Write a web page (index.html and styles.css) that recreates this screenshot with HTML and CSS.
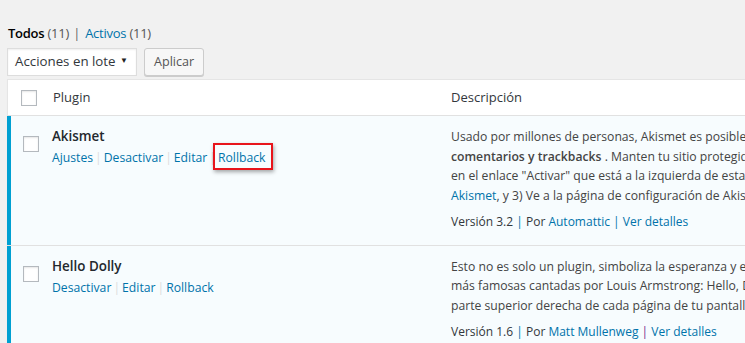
FILE: index.html
```html
<!DOCTYPE html>
<html lang="es">
<head>
<meta charset="utf-8">
<title>Plugins</title>
<link rel="stylesheet" href="styles.css">
</head>
<body>
<div class="page">
  <ul class="subsubsub">
    <li><b class="current">Todos</b> <span class="count">(11)</span> <span class="sep">|</span></li>
    <li><a href="#">Activos</a> <span class="count">(11)</span></li>
  </ul>
  <div class="tablenav">
    <div class="select"><span>Acciones en lote</span><span class="arrow">&#9660;</span></div>
    <button class="button">Aplicar</button>
  </div>
  <div class="table">
    <div class="row head">
      <div class="check"><span class="cb"></span></div>
      <div class="col-name">Plugin</div>
      <div class="col-desc">Descripción</div>
    </div>
    <div class="row active">
      <div class="check"><span class="cb"></span></div>
      <div class="col-name">
        <strong class="name">Akismet</strong>
        <div class="actions"><a href="#">Ajustes</a><i>|</i><a href="#">Desactivar</a><i>|</i><a href="#">Editar</a><i>|</i><span class="mark"><a href="#">Rollback</a></span></div>
      </div>
      <div class="col-desc">
        <p>Usado por millones de personas, Akismet es posiblemente la mejor manera en el mundo de <b>proteger tu blog del spam en</b><br><b>comentarios y trackbacks</b> . Manten tu sitio protegido incluso mientras duermes. Para empezar: 1) Haz clic<br>en el enlace "Activar" que está a la izquierda de esta descripción, 2) <a href="#">Regístrate para obtener una clave API de</a><br><a href="#">Akismet</a>, y 3) Ve a la página de configuración de Akismet para guardar tu clave API.</p>
        <div class="meta">Versión 3.2 <a class="bar">|</a> Por <a href="#">Automattic</a> <a class="bar">|</a> <a href="#">Ver detalles</a></div>
      </div>
    </div>
    <div class="row active">
      <div class="check"><span class="cb"></span></div>
      <div class="col-name">
        <strong class="name">Hello Dolly</strong>
        <div class="actions"><a href="#">Desactivar</a><i>|</i><a href="#">Editar</a><i>|</i><a href="#">Rollback</a></div>
      </div>
      <div class="col-desc">
        <p>Esto no es solo un plugin, simboliza la esperanza y el entusiasmo de toda una generación resumido en dos de las palabras<br>más famosas cantadas por Louis Armstrong: Hello, Dolly. Cuando se activa verás aleatoriamente una letra de Hello, Dolly en la<br>parte superior derecha de cada página de tu pantalla de administración.</p>
        <div class="meta">Versión 1.6 <a class="bar">|</a> Por <a href="#">Matt Mullenweg</a> <a class="bar visited">|</a> <a href="#">Ver detalles</a></div>
      </div>
    </div>
  </div>
</div>
</body>
</html>
```
FILE: styles.css
```css
html, body {
  margin: 0;
  padding: 0;
  overflow: hidden;
  background: #f1f1f1;
}
body {
  font-family: "Open Sans", "Noto Sans", sans-serif;
  font-size: 12.2px;
  line-height: 1.5;
  color: #444;
}
.page {
  width: 1100px;
  padding: 24px 0 0 7px;
}
a { color: #0073aa; text-decoration: none; }
.subsubsub {
  list-style: none;
  margin: 0 0 0 1px;
  padding: 0;
  display: flex;
  gap: 4px;
  height: 20px;
  color: #666;
  font-size: 13px;
  letter-spacing: -0.25px;
}
.subsubsub .current { color: #000; font-weight: 600; }
.subsubsub .count { color: #555; }
.subsubsub .sep { color: #666; margin: 0 1px; }
.tablenav {
  display: flex;
  gap: 7px;
  margin-top: 4px;
  height: 28px;
}
.select {
  box-sizing: border-box;
  width: 130px;
  height: 28px;
  background: #fff;
  border: 1px solid #ddd;
  box-shadow: inset 0 1px 2px rgba(0,0,0,.07);
  display: flex;
  align-items: center;
  justify-content: space-between;
  padding: 0 8px 0 7px;
  color: #32373c;
  font-size: 13.3px;
  white-space: nowrap;
}
.select .arrow { font-size: 8px; color: #222; margin-top: -4px; }
.button {
  box-sizing: border-box;
  height: 28px;
  padding: 0 9px;
  background: #f7f7f7;
  border: 1px solid #ccc;
  border-radius: 3px;
  box-shadow: 0 1px 0 #ccc;
  color: #555;
  font: inherit;
  font-size: 12.6px;
}
.table {
  margin-top: 3px;
  border: 1px solid #e5e5e5;
  background: #fff;
  box-shadow: 0 1px 1px rgba(0,0,0,.04);
}
.row {
  display: grid;
  grid-template-columns: 35px 398px 1fr;
  border-bottom: 1px solid #e1e1e1;
}
.row.head {
  height: 35px;
  align-items: center;
  color: #32373c;
  font-size: 13px;
}
.row.head .col-name, .row.head .col-desc { padding: 0 10px; }
.row.head .check { padding-left: 13px; display: flex; }
.cb {
  display: block;
  box-sizing: border-box;
  width: 16px;
  height: 16px;
  background: #fff;
  border: 1px solid #b4b9be;
  box-shadow: inset 0 1px 2px rgba(0,0,0,.1);
}
.row.active {
  background: #f7fcfe;
  box-shadow: inset 4px 0 0 #00a0d2;
  margin-left: -1px;
  padding-left: 1px;
}
.row.active .check { padding: 20px 0 0 15px; }
.row.active .col-name { padding: 10px 10px 0 9px; }
.name { color: #23282d; font-weight: 600; font-size: 13.4px; line-height: 20px; display: block; }
.actions { padding-top: 2px; line-height: 20px; }
.actions i { font-style: normal; color: #ddd; margin: 0 2px; }
.mark { position: relative; }
.mark::after {
  content: "";
  position: absolute;
  left: -5px;
  right: -8px;
  top: -6px;
  bottom: -4px;
  border: 2px solid #e8141b;
  box-shadow: 1px 2px 4px rgba(0,0,0,.35);
}
.col-desc { padding: 0 10px; white-space: nowrap; }
.row.active .col-desc { padding: 11px 10px 13px 10px; }
.col-desc p { margin: 0; line-height: 19.5px; }
.col-desc p b { font-weight: 600; color: #444; }
.meta { margin-top: 7px; line-height: 19.5px; color: #32373c; font-size: 12px; }
.meta .bar { color: #0073aa; }
.meta .bar.visited { color: #7a2a8a; }
```
